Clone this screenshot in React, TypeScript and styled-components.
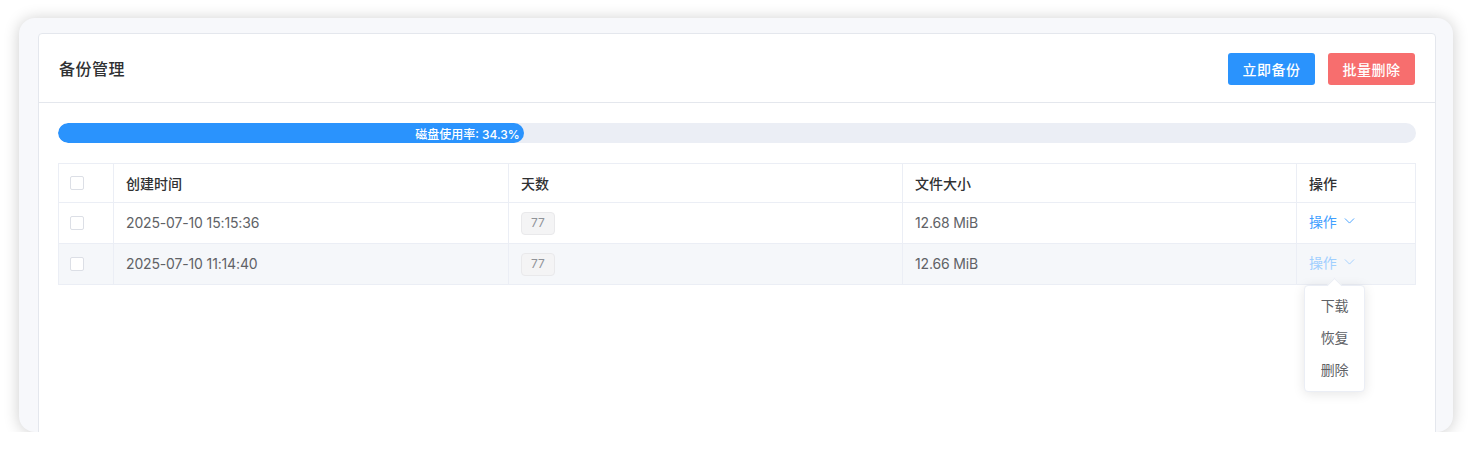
import React from "react";
import styled, { createGlobalStyle } from "styled-components";

const Global = createGlobalStyle`
  html, body { margin: 0; padding: 0; background: #ffffff; }
  body { font-family: Inter, "Noto Sans CJK SC", sans-serif; -webkit-font-smoothing: antialiased; }
  * { box-sizing: border-box; }
`;

const Frame = styled.div`
  margin: 18px 0 0 19px;
  width: 1434px;
  height: 414px;
  border-radius: 16px;
  background: #f7f8fb;
  box-shadow: 0 1px 16px rgba(0, 0, 0, 0.2);
  padding: 15px 17px 0 19px;
  overflow: hidden;
`;

const Card = styled.div`
  background: #fff;
  border: 1px solid #e4e7ed;
  border-radius: 4px;
  min-height: 460px;
`;

const Header = styled.div`
  height: 69px;
  display: flex;
  align-items: center;
  justify-content: space-between;
  padding: 0 20px;
  border-bottom: 1px solid #e4e7ed;
`;

const Title = styled.div`
  font-family: "Noto Sans CJK SC", sans-serif;
  font-size: 16px;
  font-weight: 500;
  color: #303133;
  letter-spacing: 0.5px;
`;

const Actions = styled.div`
  display: flex;
  gap: 13px;
  margin-top: 1px;
`;

const Button = styled.button<{ $tone: "primary" | "danger" }>`
  height: 32px;
  width: 87px;
  border: none;
  border-radius: 3px;
  font-family: "Noto Sans CJK SC", sans-serif;
  font-size: 14px;
  font-weight: 500;
  letter-spacing: 0.5px;
  color: #fff;
  background: ${(p) => (p.$tone === "primary" ? "#2a93fd" : "#f76e6e")};
`;

const Body = styled.div`
  padding: 20px 19px 0 19px;
  position: relative;
`;

const Track = styled.div`
  height: 20px;
  border-radius: 10px;
  background: #ebeef5;
  overflow: hidden;
`;

const Fill = styled.div`
  height: 100%;
  border-radius: 10px;
  background: #2a93fd;
  display: flex;
  align-items: center;
  justify-content: flex-end;
  padding-right: 4px;
  color: #fff;
  font-size: 12px;
  font-weight: 500;
`;

const Table = styled.table`
  margin-top: 20px;
  width: 1357px;
  border-collapse: collapse;
  table-layout: fixed;
  font-size: 14px;
`;

const Th = styled.th<{ $w: number }>`
  width: ${(p) => p.$w}px;
  height: 39px;
  border: 1px solid #ebeef5;
  text-align: left;
  padding: 0 12px;
  font-family: "Noto Sans CJK SC", sans-serif;
  font-weight: 500;
  color: #303133;
  line-height: 20px;
  &:first-child { padding: 0 11px; }
`;

const Tr = styled.tr<{ $hover?: boolean }>`
  background: ${(p) => (p.$hover ? "#f5f7fa" : "#fff")};
`;

const Td = styled.td`
  height: 41px;
  border: 1px solid #ebeef5;
  padding: 0 12px;
  color: #606266;
  line-height: 20px;
  letter-spacing: -0.15px;
  position: relative;
  &:first-child { padding: 0 11px; }
`;

const Check = styled.span`
  display: block;
  width: 14px;
  height: 14px;
  border: 1px solid #dcdfe6;
  border-radius: 2px;
  background: #fff;
`;

const Tag = styled.span`
  display: inline-flex;
  align-items: center;
  height: 23px;
  padding: 0 9px;
  font-size: 12px;
  color: #909399;
  background: #f4f4f5;
  border: 1px solid #e9e9eb;
  border-radius: 4px;
  vertical-align: middle;
`;

const Link = styled.span<{ $hover?: boolean }>`
  display: inline-flex;
  align-items: center;
  gap: 7px;
  font-family: "Noto Sans CJK SC", sans-serif;
  color: ${(p) => (p.$hover ? "#a0cfff" : "#409eff")};
  font-size: 14px;
  position: relative;
  top: -2px;
`;

const Menu = styled.div`
  position: absolute;
  top: 41px;
  left: 7px;
  width: 61px;
  background: #fff;
  border: 1px solid #ebeef5;
  border-radius: 4px;
  box-shadow: 0 2px 12px rgba(0, 0, 0, 0.1);
  padding: 3px 0 6px;
  z-index: 10;
  &::before {
    content: "";
    position: absolute;
    top: -6px;
    left: 24px;
    width: 10px;
    height: 10px;
    background: #fff;
    border-left: 1px solid #ebeef5;
    border-top: 1px solid #ebeef5;
    transform: rotate(45deg);
  }
`;

const MenuItem = styled.div`
  height: 32px;
  line-height: 32px;
  text-align: center;
  font-family: "Noto Sans CJK SC", sans-serif;
  font-size: 14px;
  color: #606266;
  position: relative;
`;

const Chevron = ({ color }: { color: string }) => (
  <svg width="11" height="11" viewBox="0 0 12 12" fill="none">
    <path d="M1 3.8L6 8.8L11 3.8" stroke={color} strokeWidth="1" />
  </svg>
);

const rows = [
  { time: "2025-07-10 15:15:36", days: 77, size: "12.68 MiB" },
  { time: "2025-07-10 11:14:40", days: 77, size: "12.66 MiB" },
];

export default function App() {
  return (
    <>
      <Global />
      <Frame>
        <Card>
          <Header>
            <Title>备份管理</Title>
            <Actions>
              <Button $tone="primary">立即备份</Button>
              <Button $tone="danger">批量删除</Button>
            </Actions>
          </Header>
          <Body>
            <Track>
              <Fill style={{ width: "34.3%" }}>磁盘使用率: 34.3%</Fill>
            </Track>
            <Table>
              <thead>
                <tr>
                  <Th $w={55}>
                    <Check />
                  </Th>
                  <Th $w={395}>创建时间</Th>
                  <Th $w={394}>天数</Th>
                  <Th $w={394}>文件大小</Th>
                  <Th $w={119}>操作</Th>
                </tr>
              </thead>
              <tbody>
                {rows.map((r, i) => {
                  const hover = i === 1;
                  return (
                    <Tr key={i} $hover={hover}>
                      <Td>
                        <Check />
                      </Td>
                      <Td>{r.time}</Td>
                      <Td>
                        <Tag>{r.days}</Tag>
                      </Td>
                      <Td>{r.size}</Td>
                      <Td>
                        <Link $hover={hover}>
                          操作
                          <Chevron color={hover ? "#a0cfff" : "#409eff"} />
                        </Link>
                        {hover && (
                          <Menu>
                            <MenuItem>下载</MenuItem>
                            <MenuItem>恢复</MenuItem>
                            <MenuItem>删除</MenuItem>
                          </Menu>
                        )}
                      </Td>
                    </Tr>
                  );
                })}
              </tbody>
            </Table>
          </Body>
        </Card>
      </Frame>
    </>
  );
}
